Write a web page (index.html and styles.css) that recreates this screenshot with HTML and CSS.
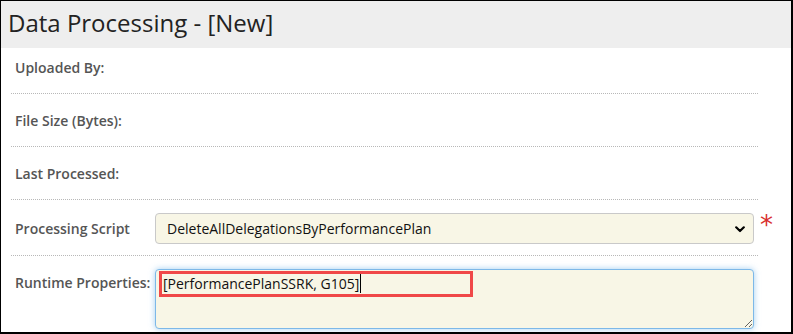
FILE: index.html
```html
<!DOCTYPE html>
<html lang="en">
<head>
<meta charset="utf-8">
<title>Data Processing - [New]</title>
<link rel="stylesheet" href="styles.css">
</head>
<body>
<div class="frame">
  <header class="header">
    <h1 class="title">Data Processing - [New]</h1>
  </header>
  <div class="form">
    <div class="row row-first">
      <div class="label">Uploaded By:</div>
      <div class="value"></div>
    </div>
    <div class="row">
      <div class="label">File Size (Bytes):</div>
      <div class="value"></div>
    </div>
    <div class="row">
      <div class="label">Last Processed:</div>
      <div class="value"></div>
    </div>
    <div class="row row-select">
      <div class="label">Processing Script</div>
      <div class="value value-select">
        <div class="select">
          <span class="select-text">DeleteAllDelegationsByPerformancePlan</span>
          <svg class="chevron" width="10" height="7" viewBox="0 0 10 7"><path d="M1.2 1.3 L5 5 L8.8 1.3" fill="none" stroke="#000" stroke-width="2.2" stroke-linecap="round" stroke-linejoin="round"/></svg>
        </div>
        <span class="required">*</span>
      </div>
    </div>
    <div class="row row-last">
      <div class="label">Runtime Properties:</div>
      <div class="value">
        <div class="textarea">
          <span class="ta-text">[PerformancePlanSSRK, G105]</span>
          <div class="highlight"></div>
        </div>
      </div>
    </div>
  </div>
</div>
</body>
</html>
```
FILE: styles.css
```css
html, body {
  margin: 0;
  padding: 0;
  background: #fff;
}
.frame {
  width: 793px;
  height: 334px;
  box-sizing: border-box;
  border-style: solid;
  border-color: #000;
  border-width: 1px 2px 2px 1px;
  background: #fff;
  overflow: hidden;
  font-family: "Open Sans", "Liberation Sans", sans-serif;
}
.header {
  height: 47px;
  background: #eeeeee;
  display: flex;
  align-items: center;
  padding-left: 7px;
}
.title {
  margin: 0;
  font-size: 24px;
  font-weight: 400;
  color: #222;
  line-height: 30px;
  margin-top: -4px;
}
.form {
  padding: 0 33px 0 10px;
}
.row {
  display: flex;
  align-items: flex-start;
  padding: 13px 0 11px;
  border-bottom: 1px dotted #b8b8b8;
}
.row-first {
  padding-top: 6px;
}
.row-select {
  align-items: center;
}
.row-last {
  border-bottom: none;
}
.label {
  width: 140px;
  flex: none;
  padding-left: 4px;
  font-size: 14px;
  font-weight: 600;
  color: #555;
  line-height: 28px;
}
.value {
  flex: 1;
  min-height: 28px;
}
.value-select {
  display: flex;
  align-items: flex-start;
}
.select {
  position: relative;
  width: 599px;
  height: 31px;
  box-sizing: border-box;
  background: #f8f6e6;
  border: 1px solid #c9c9c9;
  border-radius: 4px;
  display: flex;
  align-items: center;
  padding-left: 11px;
}
.select-text {
  font-size: 14px;
  color: #111;
}
.chevron {
  position: absolute;
  right: 8px;
  top: 12px;
}
.required {
  color: #d9302e;
  font-size: 26px;
  line-height: 20px;
  margin-left: 6px;
  margin-top: 2px;
  font-family: "DejaVu Sans", sans-serif;
}
.textarea {
  position: relative;
  width: 599px;
  height: 60px;
  box-sizing: border-box;
  background: #f8f6e6;
  border: 1px solid #7db8e8;
  border-radius: 4px;
  box-shadow: 0 0 6px rgba(102, 175, 233, 0.6);
  padding: 3px 7px;
  overflow: auto;
  resize: vertical;
  font-size: 14px;
  line-height: 22px;
  color: #111;
}
.ta-text {
  border-right: 1px solid #000;
  padding-right: 1px;
}
.highlight {
  position: absolute;
  left: 3px;
  top: 1px;
  width: 314px;
  height: 26px;
  box-sizing: border-box;
  border: 3px solid #f04848;
  pointer-events: none;
}
```
